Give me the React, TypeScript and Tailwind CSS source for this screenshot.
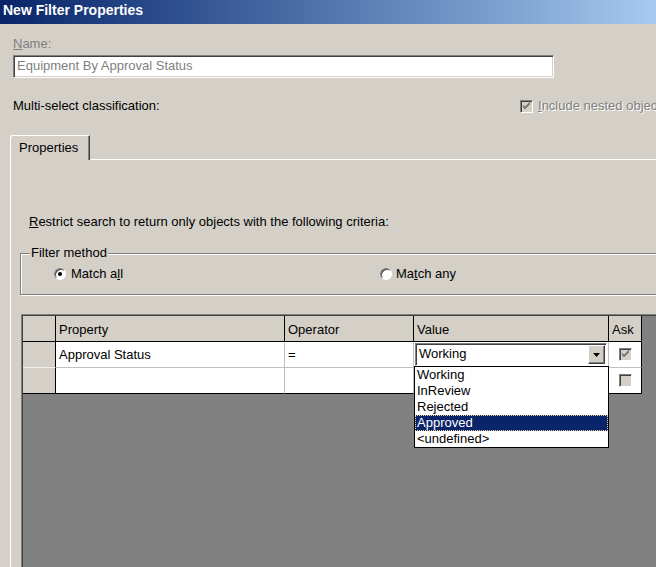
import type { ReactNode } from 'react';

const VALUES = ['Working', 'InReview', 'Rejected', 'Approved', '<undefined>'];

function CheckMark({ color }: { color: string }) {
  return (
    <svg width="9" height="9" viewBox="0 0 9 9" className="block">
      <path d="M1 4 L3 6 L8 1 M1 5 L3 7 L8 2 M1 3 L3 5 L8 0" stroke={color} strokeWidth="1" fill="none" />
    </svg>
  );
}

function Checkbox({ checked }: { checked: boolean }) {
  return (
    <div className="w-[13px] h-[13px] shrink-0 border border-t-[#808080] border-l-[#808080] border-b-white border-r-white bg-[#d4d0c8] shadow-[inset_1px_1px_0_#404040,inset_-1px_-1px_0_#d4d0c8] flex items-center justify-center">
      {checked && <CheckMark color="#808080" />}
    </div>
  );
}

function Radio({ on }: { on: boolean }) {
  return (
    <div className="w-[12px] h-[12px] shrink-0 rounded-full bg-white border border-t-[#808080] border-l-[#808080] border-b-white border-r-white shadow-[inset_1px_1px_0_#404040] flex items-center justify-center">
      {on && <div className="w-[4px] h-[4px] rounded-full bg-black" />}
    </div>
  );
}

function HeadCell({ w, children }: { w: string; children?: ReactNode }) {
  return (
    <div className={`${w} h-[26px] shrink-0 border-r border-b border-black bg-[#d4d0c8] pl-[3px] pt-[6px] whitespace-nowrap`}>
      {children}
    </div>
  );
}

export default function App() {
  return (
    <div className="w-[656px] h-[567px] overflow-hidden bg-[#d4d0c8] flex flex-col text-[13px] leading-[16px] text-black font-['Liberation_Sans',Arial,sans-serif]">
      <div className="h-[24px] shrink-0 bg-linear-to-r from-[#0a246a] to-[#a6caf0] pl-[3px] text-white font-bold text-[14px] leading-[21px]">
        New Filter Properties
      </div>

      <div className="mt-[12px] ml-[13px] text-[#808080]">
        <span className="underline">N</span>ame:
      </div>
      <div className="mt-[3px] ml-[13px] w-[541px] h-[23px] shrink-0 bg-white border border-t-[#808080] border-l-[#808080] border-b-white border-r-white shadow-[inset_1px_1px_0_#404040,inset_-1px_-1px_0_#d4d0c8] pl-[3px] pt-[2px] text-[#808080]">
        Equipment By Approval Status
      </div>

      <div className="mt-[20px] ml-[13px] h-[16px] flex items-center whitespace-nowrap">
        <div className="w-[507px] shrink-0">Multi-select classification:</div>
        <Checkbox checked />
        <span className="ml-[5px] text-[#808080] [text-shadow:1px_1px_0_#fff]">
          <span className="underline">I</span>nclude nested objects
        </span>
      </div>

      {/* tab strip */}
      <div className="mt-[21px] ml-[10px] h-[25px] shrink-0 flex">
        <div className="w-[80px] h-[25px] shrink-0 border-t border-l border-white rounded-tl-[3px] border-r border-r-[#404040] shadow-[inset_-1px_0_0_#808080] pl-[8px] pt-[4px]">
          Properties
        </div>
        <div className="flex-1 border-b border-white" />
      </div>

      <div className="ml-[10px] flex-1 min-h-0 border-l border-white flex flex-col">
        <div className="mt-[54px] ml-[18px] whitespace-nowrap">
          <span className="underline">R</span>estrict search to return only objects with the following criteria:
        </div>

        <div className="relative mt-[23px] ml-[9px] w-[700px] h-[42px] shrink-0 border border-[#808080] shadow-[inset_1px_1px_0_#fff,1px_1px_0_#fff] flex items-center">
          <span className="absolute left-[9px] -top-[9px] bg-[#d4d0c8] px-[1px]">Filter method</span>
          <div className="ml-[33px] w-[326px] shrink-0 flex items-center gap-[5px]">
            <Radio on />
            <span>
              Match a<span className="underline">l</span>l
            </span>
          </div>
          <div className="flex items-center gap-[4px]">
            <Radio on={false} />
            <span>
              Ma<span className="underline">t</span>ch any
            </span>
          </div>
        </div>

        {/* criteria grid */}
        <div className="mt-[19px] ml-[10px] flex-1 min-h-0 border-t border-l border-[#808080] bg-[#808080]">
          <div className="h-full border-t border-l border-[#404040]">
            <div className="flex">
              <HeadCell w="w-[33px]" />
              <HeadCell w="w-[229px]">Property</HeadCell>
              <HeadCell w="w-[129px]">Operator</HeadCell>
              <HeadCell w="w-[195px]">Value</HeadCell>
              <HeadCell w="w-[33px]">Ask</HeadCell>
            </div>

            <div className="flex h-[26px]">
              <div className="w-[33px] shrink-0 bg-[#d4d0c8] border-r border-r-black border-b border-b-[#f0f0f0]" />
              <div className="w-[229px] shrink-0 bg-white border-r border-b border-[#c0c0c0] pl-[3px] pt-[5px]">Approval Status</div>
              <div className="w-[129px] shrink-0 bg-white border-r border-b border-[#c0c0c0] pl-[3px] pt-[5px]">=</div>
              <div className="relative w-[195px] shrink-0 bg-white border-r border-b border-[#c0c0c0]">
                <div className="mt-[1px] ml-[1px] w-[192px] h-[23px] bg-white border border-t-[#808080] border-l-[#808080] border-b-white border-r-white shadow-[inset_1px_1px_0_#404040] flex">
                  <div className="flex-1 pl-[3px] pt-[2px]">Working</div>
                  <div className="w-[17px] h-[19px] mt-[1px] mr-[1px] bg-[#d4d0c8] border border-t-white border-l-white border-b-[#404040] border-r-[#404040] shadow-[inset_-1px_-1px_0_#808080] flex items-center justify-center">
                    <svg width="7" height="4" viewBox="0 0 7 4" className="block">
                      <path d="M0 0 H7 L3.5 4 Z" fill="#000" />
                    </svg>
                  </div>
                </div>
                <div className="absolute left-0 top-[24px] z-10 w-[195px] h-[82px] border border-black bg-white">
                  {VALUES.map((v) =>
                    v === 'Approved' ? (
                      <div key={v} className="h-[16px] leading-[14px] pl-[1px] bg-[#0a246a] text-white border border-dotted border-[#f5db95]">
                        {v}
                      </div>
                    ) : (
                      <div key={v} className="h-[16px] pl-[2px]">
                        {v}
                      </div>
                    ),
                  )}
                </div>
              </div>
              <div className="w-[33px] shrink-0 bg-white border-r border-r-black border-b border-b-[#c0c0c0] flex items-center justify-center">
                <Checkbox checked />
              </div>
            </div>

            <div className="flex h-[26px]">
              <div className="w-[33px] shrink-0 bg-[#d4d0c8] border-r border-b border-black" />
              <div className="w-[229px] shrink-0 bg-white border-r border-r-[#c0c0c0] border-b border-b-black" />
              <div className="w-[129px] shrink-0 bg-white border-r border-r-[#c0c0c0] border-b border-b-black" />
              <div className="w-[195px] shrink-0 bg-white border-r border-r-[#c0c0c0] border-b border-b-black" />
              <div className="w-[33px] shrink-0 bg-white border-r border-b border-black flex items-center justify-center">
                <Checkbox checked={false} />
              </div>
            </div>
          </div>
        </div>
      </div>
    </div>
  );
}
